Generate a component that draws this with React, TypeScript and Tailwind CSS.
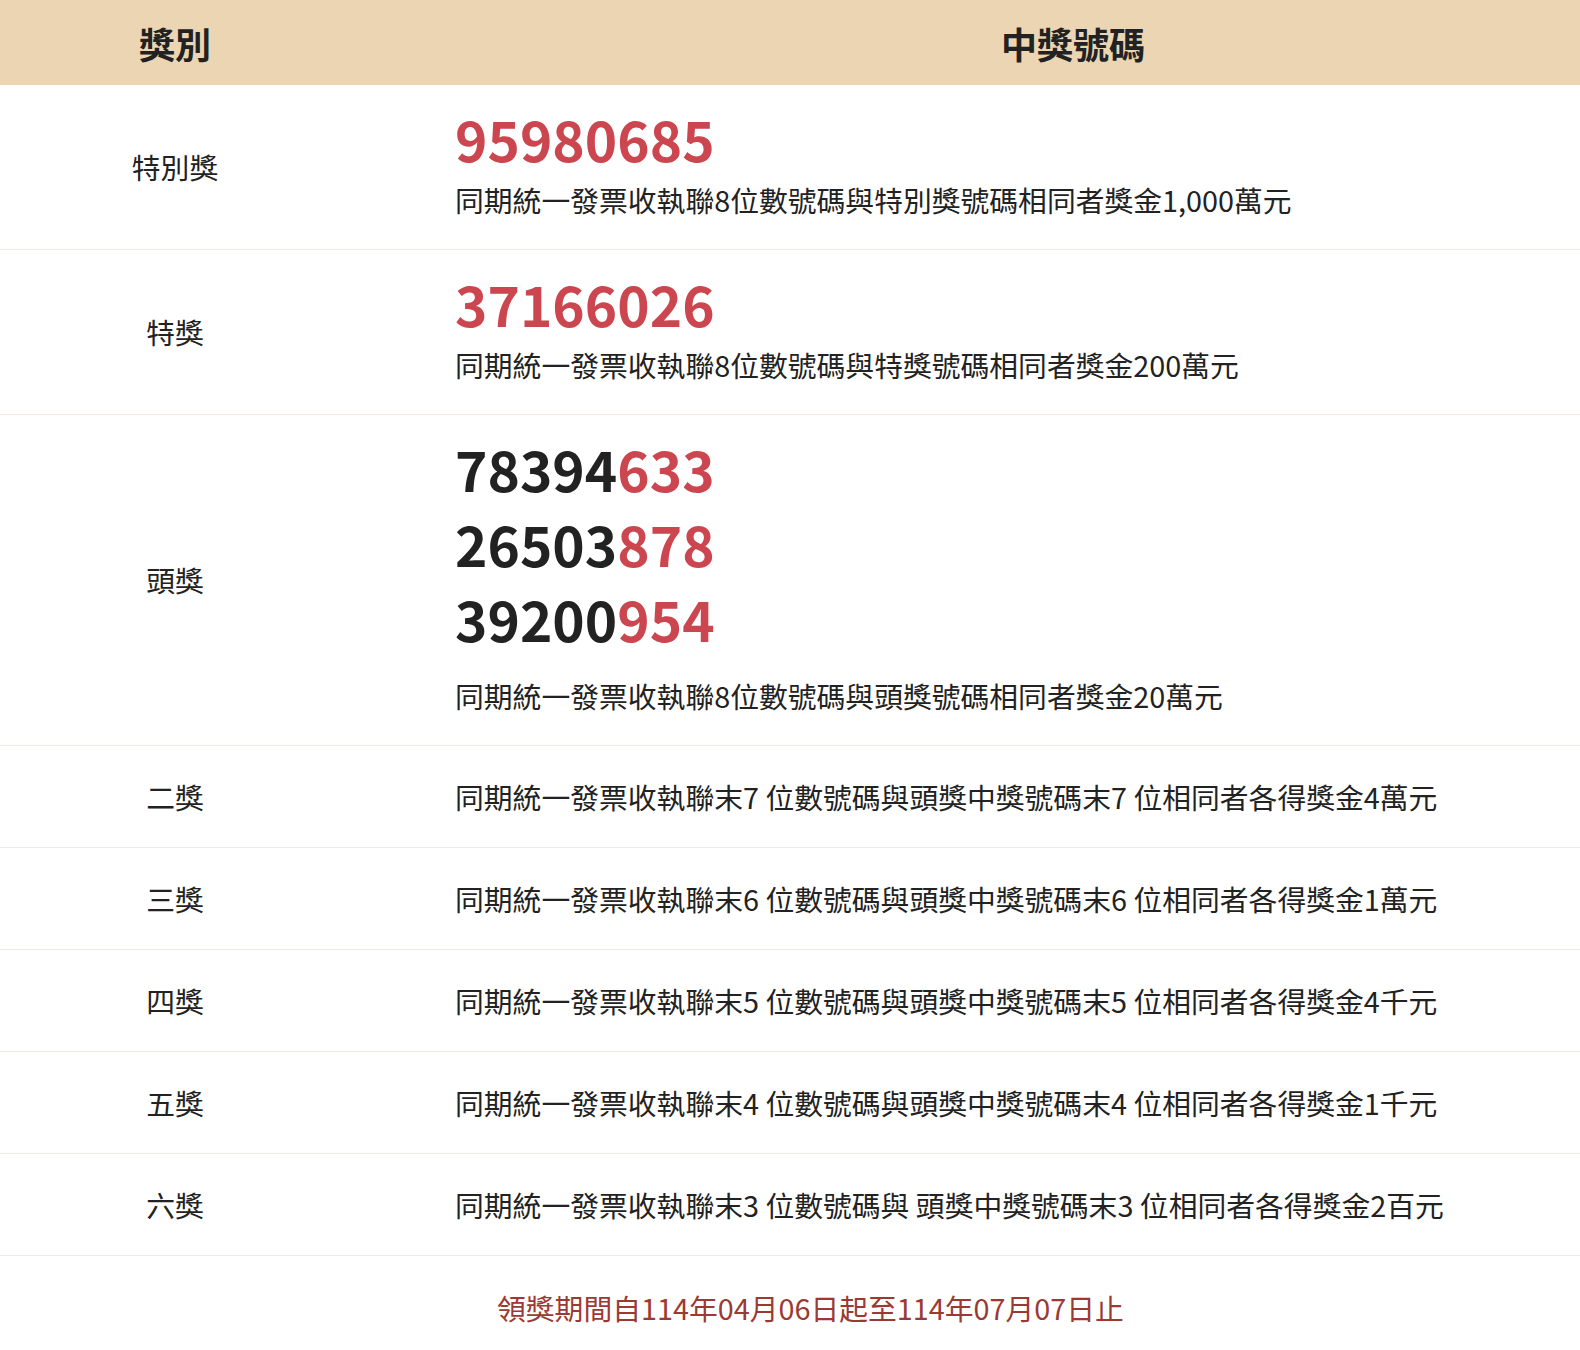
const font = { fontFamily: '"Noto Sans CJK TC", "Noto Sans", sans-serif' }

type Prize = {
  label: string
  numbers?: [string, string][]
  desc: string
}

const prizes: Prize[] = [
  {
    label: '特別獎',
    numbers: [['', '95980685']],
    desc: '同期統一發票收執聯8位數號碼與特別獎號碼相同者獎金1,000萬元',
  },
  {
    label: '特獎',
    numbers: [['', '37166026']],
    desc: '同期統一發票收執聯8位數號碼與特獎號碼相同者獎金200萬元',
  },
  {
    label: '頭獎',
    numbers: [
      ['78394', '633'],
      ['26503', '878'],
      ['39200', '954'],
    ],
    desc: '同期統一發票收執聯8位數號碼與頭獎號碼相同者獎金20萬元',
  },
  { label: '二獎', desc: '同期統一發票收執聯末7 位數號碼與頭獎中獎號碼末7 位相同者各得獎金4萬元' },
  { label: '三獎', desc: '同期統一發票收執聯末6 位數號碼與頭獎中獎號碼末6 位相同者各得獎金1萬元' },
  { label: '四獎', desc: '同期統一發票收執聯末5 位數號碼與頭獎中獎號碼末5 位相同者各得獎金4千元' },
  { label: '五獎', desc: '同期統一發票收執聯末4 位數號碼與頭獎中獎號碼末4 位相同者各得獎金1千元' },
  { label: '六獎', desc: '同期統一發票收執聯末3 位數號碼與 頭獎中獎號碼末3 位相同者各得獎金2百元' },
]

function PrizeRow({ prize }: { prize: Prize }) {
  const multi = (prize.numbers?.length || 0) > 1

  return (
    <div className="flex border-b border-[#f5e9df]">
      <div className="w-[350px] shrink-0 flex items-center justify-center text-[28.8px] text-[#222]">
        {prize.label}
      </div>
      {prize.numbers ? (
        <div className="pl-[105px] pt-4 pb-[25px]">
          {prize.numbers.map(([black, red]) => (
            <div key={black + red} className="text-[55px] leading-[75px] font-bold">
              <span className="text-[#222]">{black}</span>
              <span className="text-[#cc4650]">{red}</span>
            </div>
          ))}
          <p className={`text-[28.8px] leading-[48px] text-[#222] ${multi ? 'mt-[16px]' : ''}`}>{prize.desc}</p>
        </div>
      ) : (
        <div className="pl-[105px] py-[26px]">
          <p className="text-[28.8px] leading-[49px] text-[#222] whitespace-nowrap">{prize.desc}</p>
        </div>
      )}
    </div>
  )
}

export default function App() {
  return (
    <div className="w-[1580px] h-[1350px] overflow-hidden bg-white" style={font}>
      {/* header */}
      <div className="flex h-[85px] bg-[#ebd5b3] items-center">
        <div className="w-[350px] shrink-0 text-center text-[36px] font-bold text-[#222]">獎別</div>
        <div className="pl-[651px] text-[36px] font-bold text-[#222]">中獎號碼</div>
      </div>

      {prizes.map((p) => (
        <PrizeRow key={p.label} prize={p} />
      ))}

      {/* claim period */}
      <div className="pl-[497px] pt-[28px] text-[28.8px] leading-[48px] text-[#9b3a33]">
        領獎期間自114年04月06日起至114年07月07日止
      </div>
    </div>
  )
}
